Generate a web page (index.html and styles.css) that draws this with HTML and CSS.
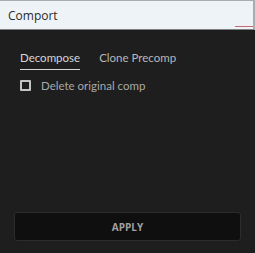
FILE: index.html
```html
<!DOCTYPE html>
<html lang="en">
<head>
    <meta charset="UTF-8">
    <title>Comport</title>
    <link rel="stylesheet" href="styles.css">
</head>
<body>
    <div class="search-box">
        <input type="text" class="search-input" value="Comport">
        <div class="search-underline"></div>
    </div>

    <div class="panel">
        <div class="tabs">
            <div class="tab active">Decompose</div>
            <div class="tab">Clone Precomp</div>
        </div>

        <label class="option">
            <span class="checkbox"></span>
            <span>Delete original comp</span>
        </label>

        <div class="spacer"></div>

        <button class="apply-btn">APPLY</button>
    </div>
</body>
</html>
```

FILE: styles.css
```css
body {
    margin: 0;
    width: 255px;
    height: 253px;
    background-color: #1e1e1e;
    font-family: "Lato", "Open Sans", sans-serif;
    display: flex;
    flex-direction: column;
    overflow: hidden;
}

.search-box {
    position: relative;
    height: 30px;
    background-color: #eef3f7;
    border-top: 1px solid #a9adb0;
    border-right: 2px solid #a9adb0;
    border-bottom: 1px solid #7d7f81;
    box-sizing: border-box;
}

.search-input {
    width: 100%;
    height: 100%;
    box-sizing: border-box;
    border: none;
    outline: none;
    background: transparent;
    padding: 0 8px;
    font-family: "Open Sans", sans-serif;
    font-size: 12px;
    color: #2b2b2b;
}

.search-underline {
    position: absolute;
    right: 0;
    bottom: 2px;
    width: 18px;
    height: 1px;
    background-color: #c76a74;
}

.panel {
    flex-grow: 1;
    display: flex;
    flex-direction: column;
    padding: 21px 14px 12px 14px;
}

.tabs {
    display: flex;
    gap: 19px;
    padding-left: 6px;
}

.tab {
    font-size: 11.5px;
    line-height: 13px;
    color: #b8b8b8;
    padding-bottom: 5px;
}

.tab.active {
    color: #d6d6d6;
    border-bottom: 1px solid #d6d6d6;
}

.option {
    display: flex;
    align-items: center;
    gap: 10px;
    margin-top: 9px;
    padding-left: 6px;
    font-size: 11.5px;
    line-height: 13px;
    color: #a8a8a8;
}

.checkbox {
    width: 7px;
    height: 7px;
    border: 2px solid #c4c4c4;
    border-radius: 1px;
}

.spacer {
    flex-grow: 1;
}

.apply-btn {
    height: 29px;
    background-color: #0f0f0f;
    border: 1px solid #2c2c2c;
    border-radius: 3px;
    color: #a0a0a0;
    font-family: "Open Sans", sans-serif;
    font-size: 10px;
    font-weight: bold;
}
```
